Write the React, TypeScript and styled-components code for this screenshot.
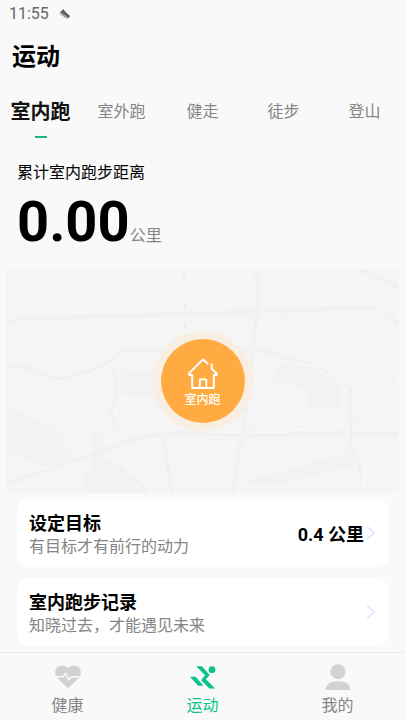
import React, { useState } from "react";
import styled, { createGlobalStyle } from "styled-components";

const GlobalStyle = createGlobalStyle`
  * { box-sizing: border-box; }
  body {
    margin: 0;
    background: #f9f9f9;
    color: #000;
    font-family: Roboto, "Noto Sans CJK SC", sans-serif;
    font-size: 16px;
  }
  button {
    font: inherit;
    color: inherit;
    border: 0;
    padding: 0;
    background: none;
    cursor: pointer;
  }
`;

const Page = styled.div`
  display: flex;
  flex-direction: column;
  min-height: 100vh;
`;

const StatusBar = styled.div`
  display: flex;
  align-items: center;
  gap: 10px;
  height: 28px;
  padding-left: 9px;
  color: #666;
  line-height: 28px;
`;

const Main = styled.main`
  flex: 1;
  display: flex;
  flex-direction: column;
`;

const Title = styled.h1`
  margin: 0;
  padding: 11px 12px 9px;
  font-size: 24px;
  line-height: 36px;
  font-weight: 700;
`;

const Tabs = styled.div`
  display: flex;
  height: 54px;
`;

const Tab = styled.button<{ $active: boolean }>`
  flex: 1;
  display: flex;
  flex-direction: column;
  align-items: center;
  justify-content: flex-end;
  gap: 6px;
  white-space: nowrap;

  && {
    color: ${(p) => (p.$active ? "#111" : "#858585")};
    font-size: ${(p) => (p.$active ? 20 : 16)}px;
    font-weight: ${(p) => (p.$active ? 700 : 400)};
    line-height: 36px;
  }

  &::after {
    content: "";
    width: 12px;
    height: 2px;
    background: ${(p) => (p.$active ? "#1fb58a" : "transparent")};
  }
`;

const Summary = styled.section`
  padding: 23px 17px 0;
`;

const SummaryLabel = styled.p`
  margin: 0;
  line-height: 24px;
`;

const Distance = styled.p`
  display: flex;
  align-items: baseline;
  margin: 0;
  height: 84px;
  line-height: 74px;
`;

const DistanceValue = styled.strong`
  font-size: 56px;
  font-weight: 700;
`;

const DistanceUnit = styled.span`
  color: #858585;
`;

const MapPanel = styled.section`
  display: flex;
  align-items: center;
  justify-content: center;
  position: relative;
  height: 224px;
  margin: 0 6px;
  background: #f5f5f5;
`;

const MapLines = styled.svg`
  position: absolute;
  inset: 0;
  width: 100%;
  height: 100%;
`;

const StartButton = styled.button`
  position: relative;
  display: flex;
  flex-direction: column;
  align-items: center;
  width: 84px;
  height: 84px;
  padding-top: 19px;
  border-radius: 50%;
  box-shadow: 0 0 0 8px #f8eee1;

  && {
    background: #ffab41;
    color: #fff;
    font-size: 12px;
    font-weight: 500;
    line-height: 20px;
  }
`;

const Cards = styled.section`
  display: flex;
  flex-direction: column;
  gap: 11px;
  padding: 6px 17px;
`;

const Card = styled.button`
  display: flex;
  align-items: center;
  height: 68px;
  padding: 0 12px;
  border-radius: 10px;
  text-align: left;

  && {
    background: #fff;
  }
`;

const CardText = styled.span`
  flex: 1;
  display: flex;
  flex-direction: column;
  padding-top: 4px;
`;

const CardTitle = styled.span`
  font-size: 18px;
  font-weight: 700;
  line-height: 24px;
`;

const CardNote = styled.span`
  color: #858585;
  line-height: 22px;
`;

const CardValue = styled.span`
  margin-right: 2px;
  font-size: 18px;
  font-weight: 700;
`;

const BottomNav = styled.nav`
  display: flex;
  height: 68px;
  border-top: 1px solid #ececec;
`;

const NavItem = styled.button<{ $active: boolean }>`
  flex: 1;
  display: flex;
  flex-direction: column;
  align-items: center;
  padding-top: 10px;

  && {
    color: ${(p) => (p.$active ? "#0bc18c" : "#858585")};
    line-height: 28px;
  }
`;

const ShoeIcon = () => (
  <svg width="12" height="12" viewBox="0 0 12 12" aria-hidden="true">
    <path d="M1 4.2 4.4 1l1.3 2.1 3 2.8 2 1.5-.1 2.2-1.3.3L1 4.2Z" fill="#606060" />
    <path d="m1 5.500 7.400 5" stroke="#777" strokeWidth="1" />
  </svg>
);

const HouseIcon = () => (
  <svg width="32" height="32" viewBox="0 0 32 32" fill="none" stroke="#fff" strokeWidth="2" strokeLinecap="round" strokeLinejoin="round" aria-hidden="true">
    <path d="m20.5 5.4-4.4-4L2 15.4q-.6 1.5 1 1.6h2.2v13h21.6V17H29q1.5-.3.7-1.500l-4.900-4.700V6.200" />
    <path d="M12.800 30v-7.200q0-1.500 1.500-1.500h3.500q1.500 0 1.500 1.500V30" />
  </svg>
);

const Chevron = () => (
  <svg width="10" height="16" viewBox="0 0 10 16" fill="none" stroke="#d5e4fb" strokeWidth="1.3" aria-hidden="true">
    <path d="m1 1.500 7.300 6.500L1 14.500" />
  </svg>
);

const HeartIcon = () => (
  <svg width="28" height="30" viewBox="0 0 28 30" aria-hidden="true">
    <path d="M14 26 3 15.700C.1 12.700 0 7.500 2.700 4.700c3-3 8-2.800 11.300.5 3.300-3.300 8.300-3.500 11.300-.5 2.700 2.800 2.600 8-.3 11Z" fill="#d2d2d2" />
    <path d="M1.500 14.300h7.300l2.500-3.300 3.700 6.300 2.300-3h9.200" fill="none" stroke="#f9f9f9" strokeWidth="1.500" />
  </svg>
);

const RunnerIcon = () => (
  <svg width="28" height="30" viewBox="0 0 28 30" fill="#0bc18c" aria-hidden="true">
    <path d="M7 3.300h5.700l8.300 9-4 4.600 9.500 9.500h-5.800L12 17.800l4.200-5Z" />
    <path d="M.5 14.300h6l8 9.300H9Z" />
    <circle cx="23.300" cy="6.900" r="3.500" />
  </svg>
);

const PersonIcon = () => (
  <svg width="28" height="30" viewBox="0 0 28 30" fill="#d2d2d2" aria-hidden="true">
    <circle cx="14" cy="9" r="7.700" />
    <path d="M1.200 28c.3-5.800 4.500-9.200 12.800-9.200S26.500 22.200 26.800 28Z" />
  </svg>
);

const StreetMap = () => (
  <MapLines viewBox="0 0 393 224" preserveAspectRatio="xMidYMid slice" fill="none" aria-hidden="true">
    <g fill="#f2f2f2">
      <path d="m0 137 43 20 27 30-31 11L0 184Z" />
      <path d="M114 101h38l5 26h-43Z" />
      <path d="M86 164h12l-1 22 21 12 24 26H81l-5-14 10-12Z" />
      <path d="m274 90 31 5 30 22v24l-34-4 2-13-34-14Z" />
      <path d="m246 210 97-27 8 12-79 20-28 1Z" />
    </g>
    <g stroke="#f1f1f1" strokeWidth="4">
      <path d="M0 53q14-4 40-4l140-4 193-7" />
      <path d="M0 97q22-2 45 13c18 2 38-9 50-12l24-17h135l48 14" />
      <path d="m0 215 89-30q54-25 105-21 95 4 143-1l26 3 30-2" />
      <path d="M249 0q5 17 1 52l-6 60-8 53-9 59" />
      <path d="m345 118-1 58q16 20 10 48M352 0l41 18M379 42l14 13" />
      <path d="M106 99q9 23-1 43 5 14 14 22M157 168l9 56M96 188l47 32" />
    </g>
    <g stroke="#fafafa" strokeWidth="1">
      <path d="m100 90 17 17-2 29-8 8 12 22M101 187l46 34M273 92l34 5 35 25v51l15 20-1 31" />
      <path d="m195 163 78 1 120-24M50 114l44-12 23-16" />
    </g>
    <g stroke="#f0f0f0" strokeWidth="1">
      <path d="m272 0 1 45q30 15 34 34l-3 13 38 26 2 57 10 26M393 104l-40 39-4 12" />
      <path d="m234 164 54-5 105-18M244 213l89-23M230 149v12h13v-12Z" />
    </g>
    <path d="M178 4v20m1 10v9m0 11v15" stroke="#e7e7e7" strokeDasharray="6 6" />
  </MapLines>
);

const activities = ["室内跑", "室外跑", "健走", "徒步", "登山"];

const navItems = [
  { label: "健康", Icon: HeartIcon },
  { label: "运动", Icon: RunnerIcon },
  { label: "我的", Icon: PersonIcon },
];

export default function App() {
  const [activity, setActivity] = useState("室内跑");

  return (
    <Page>
      <GlobalStyle />
      <StatusBar>
        <span>11:55</span>
        <ShoeIcon />
      </StatusBar>
      <Main>
        <Title>运动</Title>
        <Tabs role="tablist">
          {activities.map((name) => (
            <Tab
              key={name}
              role="tab"
              aria-selected={name === activity}
              $active={name === activity}
              onClick={() => setActivity(name)}
            >
              {name}
            </Tab>
          ))}
        </Tabs>
        <Summary>
          <SummaryLabel>累计室内跑步距离</SummaryLabel>
          <Distance>
            <DistanceValue>0.00</DistanceValue>
            <DistanceUnit>公里</DistanceUnit>
          </Distance>
        </Summary>
        <MapPanel>
          <StreetMap />
          <StartButton>
            <HouseIcon />
            室内跑
          </StartButton>
        </MapPanel>
        <Cards>
          <Card>
            <CardText>
              <CardTitle>设定目标</CardTitle>
              <CardNote>有目标才有前行的动力</CardNote>
            </CardText>
            <CardValue>0.4 公里</CardValue>
            <Chevron />
          </Card>
          <Card>
            <CardText>
              <CardTitle>室内跑步记录</CardTitle>
              <CardNote>知晓过去，才能遇见未来</CardNote>
            </CardText>
            <Chevron />
          </Card>
        </Cards>
      </Main>
      <BottomNav>
        {navItems.map(({ label, Icon }) => (
          <NavItem key={label} $active={label === "运动"}>
            <Icon />
            {label}
          </NavItem>
        ))}
      </BottomNav>
    </Page>
  );
}
